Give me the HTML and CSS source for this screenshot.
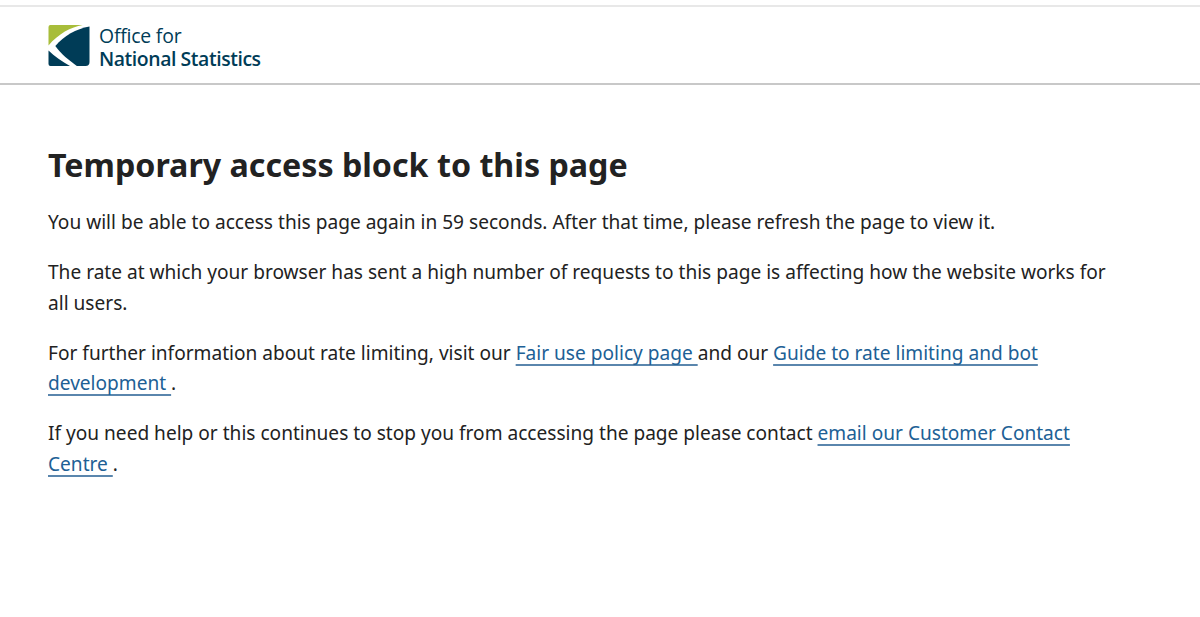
FILE: index.html
```html
<!DOCTYPE html>
<html lang="en">
<head>
  <meta charset="UTF-8">
  <title>Temporary access block to this page</title>
  <link rel="stylesheet" href="styles.css">
</head>
<body>

  <header class="site-header">
    <a class="logo" href="#">
      <svg class="logo-mark" width="42" height="41" viewBox="0 0 42 42">
        <path d="M2 0H35C23 2 10 9 0 21V2Q0 0 2 0Z" fill="#a8bd3a"/>
        <path d="M42 1.5V38Q42 42 38 42H29C21 36 13 30 7 21.5C16 11 28 4 42 1.5Z" fill="#003c57"/>
        <path d="M0 26C6 32 14 37 22 42H2Q0 42 0 40Z" fill="#003c57"/>
      </svg>
      <span class="logo-text">
        <span class="logo-light">Office for</span>
        <span class="logo-bold">National Statistics</span>
      </span>
    </a>
  </header>

  <main class="content">
    <h1>Temporary access block to this page</h1>
    <p>You will be able to access this page again in 59 seconds. After that time, please refresh the page to view it.</p>
    <p>The rate at which your browser has sent a high number of requests to this page is affecting how the website works for all users.</p>
    <p>For further information about rate limiting, visit our <a href="#">Fair use policy page </a> and our <a href="#">Guide to rate limiting and bot development </a>.</p>
    <p>If you need help or this continues to stop you from accessing the page please contact <a href="#">email our Customer Contact Centre </a>.</p>
  </main>

</body>
</html>
```

FILE: styles.css
```css
* {
  box-sizing: border-box;
}
body {
  margin: 0;
  font-family: "Noto Sans", Arial, sans-serif;
  font-size: 19.1px;
  line-height: 30.6px;
  color: #222;
  background-color: #fff;
  overflow: hidden;
}
.site-header {
  margin-top: 5px;
  height: 80px;
  padding: 18px 48px 0;
  border-top: 2px solid #e8e8e8;
  border-bottom: 2px solid #c8c8c8;
}
.logo {
  display: flex;
  gap: 9px;
  color: #003c57;
  text-decoration: none;
}
.logo-mark {
  flex: none;
}
.logo-text {
  display: flex;
  flex-direction: column;
  margin-top: -1px;
  font-family: "Open Sans", sans-serif;
  font-size: 19.4px;
  line-height: 23px;
}
.logo-light {
  font-weight: 400;
  letter-spacing: -0.2px;
}
.logo-bold {
  font-weight: 600;
  letter-spacing: -0.42px;
}
.content {
  padding: 0 48px;
  max-width: 1176px;
}
h1 {
  margin: 60px 0 22px;
  font-size: 32.2px;
  line-height: 40px;
  font-weight: 700;
}
p {
  margin: 0 0 19.4px;
}
p a {
  color: #206095;
  text-decoration: underline 2px #5a86ad;
  text-decoration-skip-ink: none;
  text-underline-offset: 4px;
}
```
